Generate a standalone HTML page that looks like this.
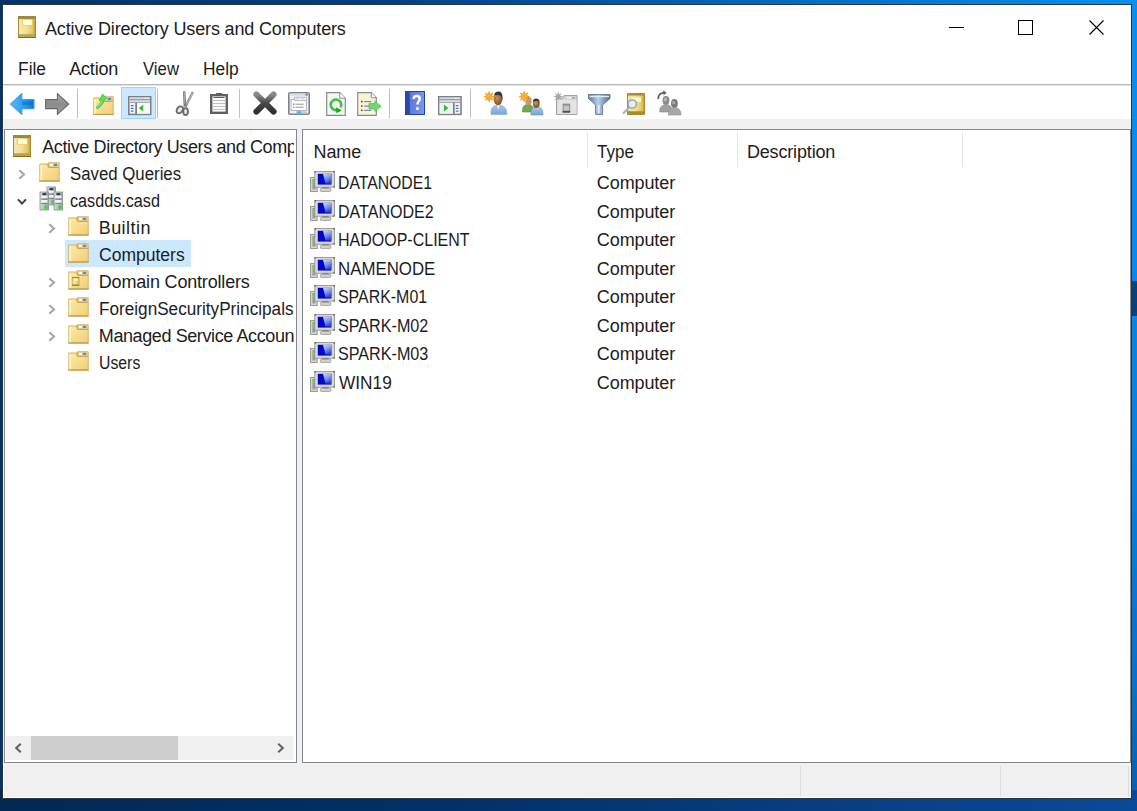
<!DOCTYPE html>
<html><head><meta charset="utf-8">
<style>
*{margin:0;padding:0;box-sizing:border-box}
html,body{width:1137px;height:811px;overflow:hidden}
body{position:relative;font-family:"Liberation Sans",sans-serif;color:#000;
 background:linear-gradient(90deg,#00346a 0%,#003e80 33%,#0068c0 67%,#0a90f0 100%);}
.bgr{position:absolute;left:1132px;top:0;width:5px;height:811px;background:linear-gradient(180deg,#0a90f0 0%,#0a88ea 30%,#0a80e0 55%,#0a70c8 85%,#0a5ca8 100%)}
.bgb{position:absolute;left:0;top:790px;width:1137px;height:21px;background:linear-gradient(90deg,#022950 0%,#03306a 40%,#0a4a98 100%)}
.win{position:absolute;left:2px;top:4px;width:1130px;height:795px;background:#f0f0f0;border:1px solid #2a3644}
.a{position:absolute;white-space:nowrap;font-size:18px;line-height:20px;color:#1c1c1c}
.wh{position:absolute;background:#fff}
.ln{position:absolute}
svg{position:absolute;overflow:visible}
</style></head>
<body>
<svg width="0" height="0" style="position:absolute">
<defs>
<linearGradient id="gBook" x1="0" x2="1" y1="0" y2="0"><stop offset="0" stop-color="#f2e6a8"/><stop offset="0.45" stop-color="#f4e0a0"/><stop offset="0.85" stop-color="#e4c860"/><stop offset="1" stop-color="#c8a030"/></linearGradient>
<linearGradient id="gFold" x1="0" x2="1" y1="0" y2="1"><stop offset="0" stop-color="#fde9a8"/><stop offset="1" stop-color="#f0d078"/></linearGradient>
<linearGradient id="gTower" x1="0" x2="1" y1="0" y2="0"><stop offset="0" stop-color="#d8dadd"/><stop offset="0.5" stop-color="#b8bcc4"/><stop offset="1" stop-color="#9aa0a8"/></linearGradient>
<linearGradient id="gScr2" x1="0" x2="0.4" y1="0" y2="1"><stop offset="0" stop-color="#d0dcf8"/><stop offset="0.6" stop-color="#7890e8"/><stop offset="1" stop-color="#3048d8"/></linearGradient>
<linearGradient id="gScr" x1="0" x2="1" y1="0" y2="0"><stop offset="0" stop-color="#0000c0"/><stop offset="0.36" stop-color="#0a20d8"/><stop offset="0.52" stop-color="#90a8f0"/><stop offset="1" stop-color="#8098e8"/></linearGradient>
<symbol id="book" viewBox="0 0 18 22">
 <rect x="0" y="0" width="18" height="22" rx="0.8" fill="#a88a38"/>
 <rect x="0" y="0" width="18" height="3" fill="#a08840"/>
 <rect x="1" y="3" width="16" height="15.5" fill="url(#gBook)"/>
 <rect x="1" y="18.5" width="16" height="2.6" fill="#b4a45c"/>
 <rect x="0" y="21" width="18" height="1" fill="#8c6a18"/>
 <rect x="4.2" y="3.6" width="10.2" height="6" fill="#e6c870"/>
 <rect x="5" y="4" width="9" height="5" fill="#fffcd8"/>
</symbol>
<symbol id="folder" viewBox="0 0 21 20">
 <path d="M0.3 2.6 Q0.3 1.6 1.3 1.6 L8.6 1.6 L9.4 0.3 L20 0.3 Q20.7 0.3 20.7 1 L20.7 19.6 L0.3 19.6 Z" fill="#d4b060"/>
 <path d="M1.3 2.6 L8.4 2.6 L9.6 5.8 L19.7 5.8 L19.7 18.6 L1.3 18.6 Z" fill="url(#gFold)"/>
 <rect x="10.2" y="1.2" width="9.5" height="3.6" fill="#f0d68c"/>
 <rect x="11.2" y="2" width="3.6" height="1.8" fill="#ffffff"/>
 <rect x="14.4" y="1.8" width="4" height="2.2" rx="1" fill="#4a8ee0"/>
 <path d="M8.4 2.6 L9.6 5.4 L19.7 5.4" fill="none" stroke="#c8a048" stroke-width="0.9"/>
 <rect x="1.3" y="3" width="1.7" height="15.6" fill="#fff4c0"/>
 <rect x="0.3" y="18.4" width="20.4" height="1.2" fill="#bf9a48"/>
</symbol>
<symbol id="server" viewBox="0 0 23 23">
 <g id="tw">
 <rect x="0" y="0" width="8.6" height="18" fill="url(#gTower)" stroke="#8a9098" stroke-width="0.8"/>
 <ellipse cx="4.3" cy="2.2" rx="2.2" ry="1.1" fill="#2c3c48"/>
 <rect x="1.2" y="3.8" width="6.2" height="2" fill="#f4f6f8"/>
 <rect x="1.2" y="6.8" width="6.2" height="0.8" fill="#6c747c"/>
 <rect x="1.2" y="8" width="6.2" height="2.6" fill="#f0f2f4"/>
 <rect x="1.2" y="11" width="6.2" height="0.8" fill="#6c747c"/>
 <rect x="4.3" y="13.5" width="3.3" height="3.3" fill="#38e020"/>
 </g>
</symbol>
<symbol id="chev" viewBox="0 0 8 11"><path d="M1.3 1.2 L6 5.5 L1.3 9.8" fill="none" stroke="#a6a6a6" stroke-width="2.1"/></symbol>
<symbol id="comp" viewBox="0 0 25 21">
 <rect x="0.6" y="6.4" width="6.6" height="14.2" fill="#d4d4d4" stroke="#888888" stroke-width="0.8"/>
 <rect x="2.4" y="8" width="3" height="10.5" fill="#9a9a9a"/>
 <rect x="1.8" y="10.5" width="3.4" height="1.8" fill="#50f050"/>
 <path d="M12.5 16 L18.5 16 L19 17.5 L12 17.5 Z" fill="#505050"/>
 <rect x="10.3" y="17.2" width="10.6" height="3.4" rx="1.4" fill="#d0d0d0" stroke="#888888" stroke-width="0.7"/>
 <rect x="4.8" y="0.4" width="19.8" height="15.8" fill="#dcd8d0" stroke="#8c8c8c" stroke-width="0.8"/>
 <circle cx="5.3" cy="0.9" r="0.8" fill="#606060"/><circle cx="24.1" cy="0.9" r="0.8" fill="#606060"/><circle cx="24.1" cy="15.7" r="0.8" fill="#606060"/>
 <rect x="7.8" y="2.8" width="13.6" height="10.8" fill="#0008c8"/>
 <path d="M13 2.8 L21.4 2.8 L21.4 12.6 L15.5 12.6 Z" fill="url(#gScr2)"/>
</symbol>
</defs></svg>
<div class="bgr"></div><div class="ln" style="left:1132px;top:281px;width:5px;height:35px;background:#0a4078"></div><div class="bgb"></div>
<div class="win"></div>
<!-- title+menu+toolbar white -->
<div class="wh" style="left:3px;top:5px;width:1128px;height:114px"></div>
<div class="ln" style="left:3px;top:84px;width:1128px;height:1px;background:#b8b8b8"></div><div class="ln" style="left:3px;top:85px;width:1128px;height:1px;background:#e4e4e4"></div>

<!-- title -->
<div class="a" style="left:45px;top:19px;letter-spacing:-0.15px">Active Directory Users and Computers</div>
<!-- window controls -->
<div class="ln" style="left:949px;top:27px;width:15px;height:1px;background:#000"></div>
<div class="ln" style="left:1018px;top:20px;width:15px;height:15px;border:1px solid #000"></div>
<svg style="left:1089px;top:20px" width="15" height="15" viewBox="0 0 15 15"><path d="M0.5 0.5L14.5 14.5M14.5 0.5L0.5 14.5" stroke="#000" stroke-width="1.1"/></svg>

<!-- menu -->
<div class="a" style="left:17.9px;top:59px;transform-origin:0 0;transform:scaleX(0.9667)">File</div>
<div class="a" style="left:69.2px;top:59px;letter-spacing:-0.18px">Action</div>
<div class="a" style="left:142.7px;top:59px;transform-origin:0 0;transform:scaleX(0.9308)">View</div>
<div class="a" style="left:202.7px;top:59px;transform-origin:0 0;transform:scaleX(0.9657)">Help</div>

<!-- tree panel -->
<div class="wh" style="left:4px;top:129px;width:293px;height:634px;border:1px solid #828790"></div>
<!-- list panel -->
<div class="wh" style="left:302px;top:129px;width:829px;height:634px;border:1px solid #828790"></div>

<!-- status bar separators -->
<div class="ln" style="left:3px;top:797px;width:1128px;height:1px;background:#fff"></div>
<div class="ln" style="left:3px;top:763px;width:1px;height:35px;background:#fff"></div>
<div class="ln" style="left:800px;top:766px;width:1px;height:30px;background:#dcdcdc"></div>
<div class="ln" style="left:1000px;top:766px;width:1px;height:30px;background:#dcdcdc"></div>
<div class="ln" style="left:1128px;top:766px;width:1px;height:30px;background:#dcdcdc"></div>

<!-- TOOLBAR -->
<div class="ln" style="left:121px;top:87px;width:35px;height:32px;background:#cce8ff;border:1px solid #99d1ff"></div>
<div class="ln" style="left:77px;top:88.5px;width:1px;height:29px;background:#c0c0c0"></div>
<div class="ln" style="left:157px;top:88.5px;width:1px;height:29px;background:#c0c0c0"></div>
<div class="ln" style="left:239px;top:88.5px;width:1px;height:29px;background:#c0c0c0"></div>
<div class="ln" style="left:389px;top:88.5px;width:1px;height:29px;background:#c0c0c0"></div>
<div class="ln" style="left:469.5px;top:88.5px;width:1px;height:29px;background:#c0c0c0"></div>
<!-- back -->
<svg style="left:10px;top:93px" width="25" height="22" viewBox="0 0 25 22">
 <defs><linearGradient id="gBk" x1="0" x2="1" y1="0" y2="0"><stop offset="0" stop-color="#58b8fc"/><stop offset="0.5" stop-color="#30a0f4"/><stop offset="1" stop-color="#0878d8"/></linearGradient></defs>
 <path d="M0.6 11.1 L11.8 0.6 L11.8 6.6 L24 6.6 L24 15.6 L11.8 15.6 L11.8 21.4 Z" fill="url(#gBk)" stroke="#4898e0" stroke-width="1.2" stroke-linejoin="round"/>
 <rect x="12" y="8.6" width="10.5" height="3.4" fill="#0a6cd0" opacity="0.55"/>
</svg>
<!-- forward -->
<svg style="left:45px;top:93px" width="25" height="22" viewBox="0 0 25 22">
 <defs><linearGradient id="gFw" x1="0" x2="0" y1="0" y2="1"><stop offset="0" stop-color="#b0b0b0"/><stop offset="0.5" stop-color="#8a8a8a"/><stop offset="1" stop-color="#a0a0a0"/></linearGradient></defs>
 <path d="M0.6 6.6 L12.4 6.6 L12.4 0.6 L23.8 11.1 L12.4 21.4 L12.4 15.6 L0.6 15.6 Z" fill="url(#gFw)" stroke="#646464" stroke-width="1.1" stroke-linejoin="round"/>
</svg>
<!-- up folder -->
<svg style="left:93px;top:96px" width="21" height="19.5" viewBox="0 0 21 20" preserveAspectRatio="none"><use href="#folder"/></svg>
<svg style="left:93px;top:92px" width="22" height="23" viewBox="0 0 22 23">
 <path d="M3 15.5 C5.5 13.5 7.5 11.5 8.2 8 L6 8.4 L9.6 2 L14.2 6.8 L11.6 7.2 C10.8 11 8.6 14.2 4.6 16.8 Z" fill="#58e058" stroke="#38b838" stroke-width="0.7" stroke-linejoin="round"/>
 <path d="M8.6 9 C8.2 11 7 13 5 14.8" fill="none" stroke="#90f090" stroke-width="0.9"/>
</svg>
<!-- console tree -->
<svg style="left:127.6px;top:96px" width="23.5" height="19.2" viewBox="0 0 24 20" preserveAspectRatio="none">
 <rect x="0.8" y="0.8" width="22.4" height="18.4" fill="#f4f4f4" stroke="#7a8088" stroke-width="1.6"/>
 <rect x="1.6" y="1.6" width="20.8" height="1.8" fill="#d4d8de"/>
 <rect x="17" y="1.8" width="1.6" height="1.4" fill="#f0f0f0"/><rect x="19.6" y="1.8" width="1.6" height="1.4" fill="#f0f0f0"/>
 <rect x="1.6" y="3.4" width="20.8" height="1.2" fill="#7a8088"/>
 <rect x="1.6" y="4.6" width="20.8" height="1.6" fill="#d8dce2"/>
 <rect x="1.6" y="6.2" width="20.8" height="1" fill="#9aa0a8"/>
 <rect x="7.4" y="7" width="1.8" height="12" fill="#7a8088"/>
 <rect x="9.2" y="7.2" width="13.2" height="11.2" fill="#f8f8f8"/>
 <rect x="2.8" y="9.4" width="3" height="1.3" rx="0.6" fill="#3a78c8"/><rect x="2.8" y="12.2" width="3" height="1.3" rx="0.6" fill="#3a78c8"/><rect x="2.8" y="15" width="3" height="1.3" rx="0.6" fill="#3a78c8"/>
 <path d="M11 12.6 L15.6 9 L15.6 16.4 Z" fill="#38b838"/>
</svg>
<!-- scissors -->
<svg style="left:176px;top:91px" width="18" height="25" viewBox="0 0 18 25">
 <path d="M7 0.3 L9.4 0.3 L10.2 15.5 L7.6 15.5 Z" fill="#787878"/>
 <path d="M7.8 0.8 L8.6 0.8 L9.2 13 L8.4 13 Z" fill="#b0b0b0"/>
 <path d="M15.8 0.6 L17.8 1.8 L10.4 16.5 L8.4 15.2 Z" fill="#8a8a8a"/>
 <path d="M16 2.2 L16.8 2.8 L11 13.5 L10.4 13 Z" fill="#c8c8c8" opacity="0.8"/>
 <ellipse cx="3.8" cy="18.8" rx="2.8" ry="3.8" transform="rotate(38 3.8 18.8)" fill="#e8e8e8" stroke="#6a6a6a" stroke-width="1.9"/>
 <ellipse cx="9.6" cy="20.6" rx="2.4" ry="3.5" fill="#e8e8e8" stroke="#6a6a6a" stroke-width="1.9"/>
</svg>
<!-- clipboard -->
<svg style="left:210px;top:93px" width="18" height="21" viewBox="0 0 18 21">
 <rect x="1.2" y="2.2" width="15.6" height="17.6" fill="#fafafa" stroke="#606060" stroke-width="2.4"/>
 <rect x="6" y="0" width="6" height="2.6" fill="#606060"/>
 <rect x="3.5" y="4" width="11" height="1" fill="#606060"/>
 <rect x="3" y="7" width="12" height="0.9" fill="#b8b8b8"/><rect x="3" y="10" width="12" height="0.9" fill="#b8b8b8"/><rect x="3" y="13" width="12" height="0.9" fill="#b8b8b8"/><rect x="3" y="16" width="12" height="0.9" fill="#b8b8b8"/>
</svg>
<!-- delete X -->
<svg style="left:253px;top:91px" width="24" height="24" viewBox="0 0 24 24">
 <defs><linearGradient id="gX" x1="0" x2="0" y1="0" y2="1"><stop offset="0" stop-color="#8c8c8c"/><stop offset="0.5" stop-color="#484848"/><stop offset="1" stop-color="#303030"/></linearGradient></defs>
 <path d="M3.4 3.4 L20.6 20.6 M20.6 3.4 L3.4 20.6" stroke="url(#gX)" stroke-width="6" stroke-linecap="round"/>
</svg>
<!-- properties -->
<svg style="left:288px;top:91.5px" width="22" height="23" viewBox="0 0 22 23">
 <rect x="0.8" y="0.8" width="20.4" height="21.4" rx="1.2" fill="#f2f2f2" stroke="#7c8088" stroke-width="1.6"/>
 <rect x="1.6" y="1.6" width="18.8" height="2.2" fill="#d8dce0"/>
 <rect x="17.5" y="1.6" width="2.2" height="2" fill="#6080b0"/>
 <rect x="3" y="7.5" width="15.5" height="11" fill="#ffffff" stroke="#a8aec8" stroke-width="0.9"/>
 <rect x="6.8" y="5.2" width="11.7" height="3.4" fill="#ffffff" stroke="#a8aec8" stroke-width="0.9"/>
 <rect x="8" y="6.2" width="3.6" height="1.2" fill="#c8ccd8"/><rect x="13" y="6.2" width="3.6" height="1.2" fill="#c8ccd8"/>
 <rect x="5" y="11.5" width="1.4" height="1.4" fill="#20a8f0"/><rect x="7.5" y="11.7" width="8" height="1" fill="#909090"/>
 <rect x="5" y="14.5" width="1.4" height="1.4" fill="#909090"/><rect x="7.5" y="14.7" width="8" height="1" fill="#909090"/>
 <rect x="8.6" y="19.2" width="5" height="2.2" fill="#30c0f8"/><rect x="14.5" y="19.2" width="4" height="2.2" fill="#c8c8c8"/>
</svg>
<!-- refresh -->
<svg style="left:325.5px;top:91.5px" width="20" height="24" viewBox="0 0 20 24">
 <path d="M0.7 0.7 L13.8 0.7 L19.3 6.2 L19.3 23.3 L0.7 23.3 Z" fill="#f6f6f6" stroke="#8c8c8c" stroke-width="1.2"/>
 <path d="M13.8 0.7 L13.8 6.2 L19.3 6.2" fill="#ffffff" stroke="#8c8c8c" stroke-width="1"/>
 <path d="M14.6 15.4 A5.3 5.3 0 1 0 10.9 18" fill="none" stroke="#40c040" stroke-width="2.6"/>
 <path d="M10 15.2 L15.8 18.4 L10.4 21.2 Z" fill="#18a818"/>
</svg>
<!-- export -->
<svg style="left:357px;top:91.5px" width="25" height="24" viewBox="0 0 25 24">
 <path d="M0.7 0.7 L14.3 0.7 L19.3 5.7 L19.3 23.3 L0.7 23.3 Z" fill="#fbf3d8" stroke="#8c8c8c" stroke-width="1.2"/>
 <path d="M14.3 0.7 L14.3 5.7 L19.3 5.7" fill="#ffffff" stroke="#8c8c8c" stroke-width="1"/>
 <rect x="4" y="8.8" width="1.5" height="1.5" fill="#404040"/><rect x="7.2" y="9" width="7" height="1.2" fill="#8080a8"/>
 <rect x="4" y="13.3" width="1.5" height="1.5" fill="#404040"/><rect x="7.2" y="13.5" width="7" height="1.2" fill="#8080a8"/>
 <rect x="4" y="17.6" width="1.5" height="1.5" fill="#404040"/><rect x="7.2" y="17.8" width="7" height="1.2" fill="#8080a8"/>
 <path d="M12 11.6 L17.8 11.6 L17.8 9.2 L24.2 14.3 L17.8 19.3 L17.8 17 L12 17 Z" fill="#70d870" stroke="#48c048" stroke-width="0.7"/>
</svg>
<!-- help -->
<svg style="left:405px;top:91px" width="20" height="24" viewBox="0 0 20 24">
 <defs><linearGradient id="gHp" x1="0" x2="1" y1="0" y2="0"><stop offset="0" stop-color="#5070d8"/><stop offset="1" stop-color="#7a98ec"/></linearGradient></defs>
 <rect x="0.5" y="0.5" width="19" height="23" fill="url(#gHp)" stroke="#2040b0" stroke-width="1"/>
 <rect x="0.8" y="0.8" width="4" height="22.4" fill="#2c48a8"/>
 <path d="M8.6 8 C8.6 5.8 10 5 11.6 5 C13.6 5 14.8 6.2 14.8 8 C14.8 10 12.4 10.8 12.4 13.4" fill="none" stroke="#ffffff" stroke-width="2.4"/>
 <rect x="11" y="16.3" width="2.8" height="2.6" fill="#ffffff"/>
</svg>
<!-- action pane -->
<svg style="left:438px;top:96px" width="23.8" height="19.2" viewBox="0 0 24 20" preserveAspectRatio="none">
 <rect x="0.8" y="0.8" width="22.4" height="18.4" fill="#f4f4f4" stroke="#7a8088" stroke-width="1.6"/>
 <rect x="1.6" y="1.6" width="20.8" height="1.8" fill="#d4d8de"/>
 <rect x="17" y="1.8" width="1.6" height="1.4" fill="#f0f0f0"/><rect x="19.6" y="1.8" width="1.6" height="1.4" fill="#f0f0f0"/>
 <rect x="1.6" y="3.4" width="20.8" height="1.2" fill="#7a8088"/>
 <rect x="1.6" y="4.6" width="20.8" height="1.6" fill="#d8dce2"/>
 <rect x="1.6" y="6.2" width="20.8" height="1" fill="#9aa0a8"/>
 <rect x="15" y="7" width="1.8" height="12" fill="#7a8088"/>
 <rect x="1.6" y="7.2" width="13.4" height="11.2" fill="#f0f0f0"/>
 <rect x="17.8" y="9.4" width="3" height="1.3" rx="0.6" fill="#3a78c8"/><rect x="17.8" y="12.2" width="3" height="1.3" rx="0.6" fill="#3a78c8"/><rect x="17.8" y="15" width="3" height="1.3" rx="0.6" fill="#3a78c8"/>
 <path d="M6 8.8 L10.4 12.6 L6 16.4 Z" fill="#38b838"/>
</svg>
<!-- new user -->
<svg style="left:484px;top:91px" width="24" height="25" viewBox="0 0 24 25">
 <defs><radialGradient id="gSkin" cx="0.4" cy="0.4" r="0.7"><stop offset="0" stop-color="#c89060"/><stop offset="1" stop-color="#7a4818"/></radialGradient>
 <linearGradient id="gShirt" x1="0" x2="0" y1="0" y2="1"><stop offset="0" stop-color="#a8c8ec"/><stop offset="1" stop-color="#78a4d8"/></linearGradient></defs>
 <path d="M7 23.6 C6.6 17.4 8.6 14.4 14.4 14 C20.4 14.4 22.8 17.4 22.8 23.6 Z" fill="url(#gShirt)" stroke="#80a0c8" stroke-width="0.6"/>
 <path d="M13 14.2 L14.2 18.5 L15.6 14.2 Z" fill="#ffffff"/>
 <ellipse cx="14" cy="8" rx="4.4" ry="6.2" fill="url(#gSkin)"/>
 <path d="M10 4.5 C10.5 1.5 12.5 0.6 14.5 0.6 C17.5 0.6 18.8 3 18.4 9 L17 5 C15 4 12 3.8 10 4.5 Z" fill="#383838"/>
 <path d="M5.20 0.40 L6.12 3.38 L8.88 1.92 L7.42 4.68 L10.40 5.60 L7.42 6.52 L8.88 9.28 L6.12 7.82 L5.20 10.80 L4.28 7.82 L1.52 9.28 L2.98 6.52 L0.00 5.60 L2.98 4.68 L1.52 1.92 L4.28 3.38 Z" fill="#f8b030" stroke="#f0a020" stroke-width="0.9" stroke-linejoin="round"/>
</svg>
<!-- new group -->
<svg style="left:518.5px;top:91px" width="25" height="25" viewBox="0 0 25 25">
 <path d="M3.5 21 C3 16 5 13.5 9 13.3 C13 13.5 14.5 16 14.5 21 Z" fill="#70a850" stroke="#5a9040" stroke-width="0.6"/>
 <ellipse cx="9.5" cy="10" rx="3.2" ry="4.2" fill="#c89868"/>
 <path d="M12 24 C11.5 19 13 16 18 15.8 C22.5 16 24 19 24 24 Z" fill="url(#gShirt)" stroke="#6890c0" stroke-width="0.6"/>
 <path d="M17.2 15.8 L18.3 18.5 L19.4 15.8 Z" fill="#ffffff"/>
 <ellipse cx="17.3" cy="12.4" rx="3.3" ry="4.6" fill="url(#gSkin)"/>
 <path d="M14 11 C14 8 15.5 7.8 17.5 7.8 C19.5 7.8 20.6 9 20.4 12 L19.2 10 C18 9.6 15.6 9.8 14 11 Z" fill="#303030"/>
 <path d="M5.20 0.40 L6.12 3.38 L8.88 1.92 L7.42 4.68 L10.40 5.60 L7.42 6.52 L8.88 9.28 L6.12 7.82 L5.20 10.80 L4.28 7.82 L1.52 9.28 L2.98 6.52 L0.00 5.60 L2.98 4.68 L1.52 1.92 L4.28 3.38 Z" fill="#f8b030" stroke="#f0a020" stroke-width="0.9" stroke-linejoin="round"/>
</svg>
<!-- new OU (gray) -->
<svg style="left:553px;top:91px" width="25" height="24" viewBox="0 0 25 24">
 <path d="M3.5 23.5 L3.5 7 L10 7 L11 4.5 L24 4.5 L24 23.5 Z" fill="#d4d4d4" stroke="#a4a4a4" stroke-width="1"/>
 <rect x="4.5" y="9" width="19" height="14" fill="#e4e4e4"/>
 <rect x="14" y="6" width="4" height="1.6" fill="#f4f4f4"/><rect x="19" y="6" width="3" height="1.6" fill="#a8a8a8"/>
 <rect x="9.6" y="12.6" width="7.6" height="9" fill="#909090"/>
 <rect x="10.6" y="14.6" width="5.6" height="5" fill="#c4c4c4"/>
 <rect x="9.6" y="20" width="7.6" height="1.6" fill="#505050"/>
 <path d="M5.2 0.2 L6 3.6 L9 1.8 L7 4.8 L10.5 5.6 L7 6.4 L9 9.4 L6 7.4 L5.2 10.6 L4.4 7.4 L1.4 9.4 L3.4 6.4 L0 5.6 L3.4 4.8 L1.4 1.8 L4.4 3.6 Z" fill="#a8a8a8"/>
</svg>
<!-- filter -->
<svg style="left:588px;top:94px" width="23" height="21" viewBox="0 0 23 21">
 <defs><linearGradient id="gFl" x1="0" x2="1" y1="0" y2="0"><stop offset="0" stop-color="#5c7898"/><stop offset="0.45" stop-color="#b8d0ec"/><stop offset="1" stop-color="#506c8c"/></linearGradient></defs>
 <path d="M0.5 0.6 L22 0.6 L22 4.6 L14.6 11 L14.6 20.4 L7.6 20.4 L7.6 11 L0.5 4.6 Z" fill="url(#gFl)" stroke="#607890" stroke-width="0.9"/>
 <rect x="1.5" y="1.8" width="19.5" height="1.4" fill="#e0ecf8"/>
 <rect x="10" y="11" width="1.6" height="8" fill="#e4eef8"/>
</svg>
<!-- find -->
<svg style="left:622px;top:93px" width="23" height="23" viewBox="0 0 23 23">
 <rect x="5" y="0" width="18" height="22" rx="1" fill="#b08a2a"/>
 <rect x="6" y="2.5" width="16" height="16" fill="url(#gBook)"/>
 <rect x="5.5" y="18.5" width="17" height="3" fill="#a88c30"/>
 <rect x="9.5" y="4.5" width="9.5" height="4.5" fill="#fff9d0"/>
 <circle cx="10.2" cy="11" r="4.2" fill="#e4f0e8" stroke="#8c9cac" stroke-width="1.3"/>
 <path d="M7.2 14.4 L1.6 20" stroke="#a8b0b8" stroke-width="2" stroke-linecap="round"/>
</svg>
<!-- add to group (gray) -->
<svg style="left:657px;top:91px" width="25" height="25" viewBox="0 0 25 25">
 <path d="M1.2 8 C1 4 3.5 1.8 7.5 1.6" fill="none" stroke="#606060" stroke-width="1.8"/>
 <path d="M6.2 -0.4 L9.6 1.6 L6.6 4.6 Z" fill="#606060"/>
 <path d="M2.6 21 C2.6 16 5 13.6 9 13.4 C13 13.6 15 16 15 21 Z" fill="#a0a0a0" stroke="#8a8a8a" stroke-width="0.6"/>
 <ellipse cx="9" cy="9.4" rx="3.4" ry="4.4" fill="#8a8a8a"/>
 <ellipse cx="8.4" cy="8.6" rx="1.6" ry="2" fill="#b8b8b8"/>
 <path d="M11.5 24 C11.2 19.5 13.2 16.6 17.6 16.4 C22 16.6 24 19.5 24 24 Z" fill="#a8a8a8" stroke="#8a8a8a" stroke-width="0.6"/>
 <ellipse cx="17.4" cy="12.4" rx="3.4" ry="4.4" fill="#7a7a7a"/>
 <ellipse cx="16.8" cy="11.6" rx="1.5" ry="1.9" fill="#a8a8a8"/>
</svg>

<!-- TREE -->
<div class="ln" style="left:65px;top:240px;width:126px;height:27px;background:#cce8ff"></div>
<div class="a" style="left:42.2px;top:137px;width:251.8px;overflow:hidden;letter-spacing:-0.38px">Active Directory Users and Computers</div>
<div class="a" style="left:69.8px;top:164px;transform-origin:0 0;transform:scaleX(0.9331)">Saved Queries</div>
<div class="a" style="left:70.1px;top:191px;transform-origin:0 0;transform:scaleX(0.899)">casdds.casd</div>
<div class="a" style="left:98.7px;top:218px;letter-spacing:0.45px">Builtin</div>
<div class="a" style="left:98.5px;top:245px;transform-origin:0 0;transform:scaleX(0.9736)">Computers</div>
<div class="a" style="left:98.8px;top:272px;letter-spacing:-0.18px">Domain Controllers</div>
<div class="a" style="left:98.8px;top:299px;transform-origin:0 0;transform:scaleX(0.9532)">ForeignSecurityPrincipals</div>
<div class="a" style="left:98.8px;top:326px;width:195.2px;overflow:hidden;letter-spacing:-0.4px">Managed Service Accounts</div>
<div class="a" style="left:98.8px;top:353px;transform-origin:0 0;transform:scaleX(0.8783)">Users</div>

<!-- LIST header -->
<div class="a" style="left:313.5px;top:141.5px;letter-spacing:-0.07px">Name</div>
<div class="a" style="left:597.1px;top:141.5px;transform-origin:0 0;transform:scaleX(0.9474)">Type</div>
<div class="a" style="left:746.9px;top:141.5px;letter-spacing:-0.16px">Description</div>
<div class="ln" style="left:587px;top:132px;width:1px;height:35px;background:#e5e5e5"></div>
<div class="ln" style="left:737px;top:132px;width:1px;height:35px;background:#e5e5e5"></div>
<div class="ln" style="left:962px;top:132px;width:1px;height:35px;background:#e5e5e5"></div>

<!-- LIST rows -->
<div class="a" style="left:337.7px;top:173.4px;transform-origin:0 0;transform:scaleX(0.8755)">DATANODE1</div><div class="a" style="left:596.8px;top:173.4px;letter-spacing:-0.09px">Computer</div>
<div class="a" style="left:337.6px;top:201.9px;transform-origin:0 0;transform:scaleX(0.8915)">DATANODE2</div><div class="a" style="left:596.8px;top:201.9px;letter-spacing:-0.09px">Computer</div>
<div class="a" style="left:337.6px;top:230.4px;transform-origin:0 0;transform:scaleX(0.8891)">HADOOP-CLIENT</div><div class="a" style="left:596.8px;top:230.4px;letter-spacing:-0.09px">Computer</div>
<div class="a" style="left:337.6px;top:258.9px;transform-origin:0 0;transform:scaleX(0.9353)">NAMENODE</div><div class="a" style="left:596.8px;top:258.9px;letter-spacing:-0.09px">Computer</div>
<div class="a" style="left:337.6px;top:287.4px;transform-origin:0 0;transform:scaleX(0.8848)">SPARK-M01</div><div class="a" style="left:596.8px;top:287.4px;letter-spacing:-0.09px">Computer</div>
<div class="a" style="left:337.6px;top:315.9px;transform-origin:0 0;transform:scaleX(0.897)">SPARK-M02</div><div class="a" style="left:596.8px;top:315.9px;letter-spacing:-0.09px">Computer</div>
<div class="a" style="left:337.6px;top:344.4px;transform-origin:0 0;transform:scaleX(0.897)">SPARK-M03</div><div class="a" style="left:596.8px;top:344.4px;letter-spacing:-0.09px">Computer</div>
<div class="a" style="left:338.6px;top:372.9px;transform-origin:0 0;transform:scaleX(0.9593)">WIN19</div><div class="a" style="left:596.8px;top:372.9px;letter-spacing:-0.09px">Computer</div>

<!-- tree icons -->
<svg style="left:13px;top:135px" width="18" height="22"><use href="#book"/></svg>
<svg style="left:18px;top:16px" width="18" height="22"><use href="#book"/></svg>
<svg style="left:39px;top:161.8px" width="21" height="20"><use href="#folder"/></svg>
<svg style="left:67.5px;top:215.8px" width="21" height="20"><use href="#folder"/></svg>
<svg style="left:67.5px;top:242.8px" width="21" height="20"><use href="#folder"/></svg>
<svg style="left:67.5px;top:269.8px" width="21" height="20"><use href="#folder"/></svg>
<svg style="left:67.5px;top:296.8px" width="21" height="20"><use href="#folder"/></svg>
<svg style="left:67.5px;top:323.8px" width="21" height="20"><use href="#folder"/></svg>
<svg style="left:67.5px;top:350.8px" width="21" height="20"><use href="#folder"/></svg>
<svg style="left:72px;top:277.4px" width="7.5" height="9" viewBox="0 0 18 22" preserveAspectRatio="none"><use href="#book"/></svg>
<svg style="left:46.7px;top:187.3px" width="9" height="18" viewBox="0 0 9 18"><use href="#tw"/></svg>
<svg style="left:40.3px;top:191.8px" width="9" height="18" viewBox="0 0 9 18"><use href="#tw"/></svg>
<svg style="left:54.1px;top:191.8px" width="9" height="18" viewBox="0 0 9 18"><use href="#tw"/></svg>
<svg style="left:18.3px;top:169px" width="8" height="11"><use href="#chev"/></svg>
<svg style="left:47.6px;top:223px" width="8" height="11"><use href="#chev"/></svg>
<svg style="left:47.6px;top:277px" width="8" height="11"><use href="#chev"/></svg>
<svg style="left:47.6px;top:304px" width="8" height="11"><use href="#chev"/></svg>
<svg style="left:47.6px;top:331px" width="8" height="11"><use href="#chev"/></svg>
<svg style="left:17px;top:197.5px" width="10" height="8" viewBox="0 0 10 8"><path d="M1 1.4 L5 5.6 L9 1.4" fill="none" stroke="#404040" stroke-width="2.1"/></svg>
<!-- list icons -->
<svg style="left:310px;top:171.0px" width="25" height="21"><use href="#comp"/></svg>
<svg style="left:310px;top:199.5px" width="25" height="21"><use href="#comp"/></svg>
<svg style="left:310px;top:228.0px" width="25" height="21"><use href="#comp"/></svg>
<svg style="left:310px;top:256.5px" width="25" height="21"><use href="#comp"/></svg>
<svg style="left:310px;top:285.0px" width="25" height="21"><use href="#comp"/></svg>
<svg style="left:310px;top:313.5px" width="25" height="21"><use href="#comp"/></svg>
<svg style="left:310px;top:342.0px" width="25" height="21"><use href="#comp"/></svg>
<svg style="left:310px;top:370.5px" width="25" height="21"><use href="#comp"/></svg>

<!-- tree scrollbar -->
<div class="ln" style="left:6px;top:736px;width:288px;height:24px;background:#f0f0f0"></div>
<div class="ln" style="left:31px;top:736px;width:147px;height:24px;background:#cdcdcd"></div>
<svg style="left:13.5px;top:742.5px" width="9" height="10" viewBox="0 0 9 10"><path d="M6.8 0.8 L2.2 5 L6.8 9.2" fill="none" stroke="#606060" stroke-width="2"/></svg>
<svg style="left:275.5px;top:742.5px" width="9" height="10" viewBox="0 0 9 10"><path d="M2.2 0.8 L6.8 5 L2.2 9.2" fill="none" stroke="#606060" stroke-width="2"/></svg>

</body></html>
